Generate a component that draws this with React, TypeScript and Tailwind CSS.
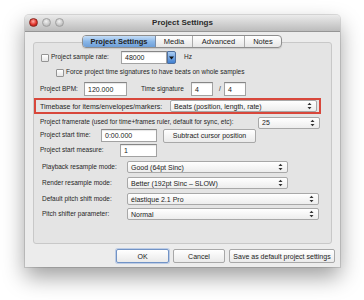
import React from "react";

const font = { fontFamily: '"Liberation Sans", Arial, sans-serif' };

function Arrows() {
  return (
    <svg width="5" height="8" viewBox="0 0 5 8" className="shrink-0">
      <path d="M0.5 3 L2.5 0.8 L4.5 3 Z" fill="#333" />
      <path d="M0.5 5 L2.5 7.2 L4.5 5 Z" fill="#333" />
    </svg>
  );
}

function Select({ text, w, h = 12 }: { text: string; w: number; h?: number }) {
  return (
    <div
      className="flex items-center justify-between shrink-0 border border-[#a8a8a8] rounded-[2px] bg-gradient-to-b from-[#ffffff] to-[#ededed] pl-[3px] pr-[4px] text-[7px] text-[#222]"
      style={{ width: w, height: h }}
    >
      <span className="whitespace-nowrap leading-none">{text}</span>
      <Arrows />
    </div>
  );
}

function Input({ text, w, h = 13 }: { text: string; w: number; h?: number }) {
  return (
    <div
      className="flex items-center shrink-0 border border-[#a2a2a2] border-t-[#868686] bg-white pl-[3px] text-[7px] text-[#222] shadow-[inset_0_1px_1px_rgba(0,0,0,0.1)]"
      style={{ width: w, height: h }}
    >
      <span className="leading-none">{text}</span>
    </div>
  );
}

function Check() {
  return (
    <div className="w-[8px] h-[8px] border border-[#949494] rounded-[1px] bg-gradient-to-b from-[#ffffff] to-[#e6e6e6] shrink-0" />
  );
}

function Btn({ text, w, def = false }: { text: string; w: number; def?: boolean }) {
  return (
    <div
      className={
        "flex items-center justify-center shrink-0 h-[14px] rounded-[2px] bg-gradient-to-b from-[#ffffff] to-[#eaeaea] text-[7px] text-[#222] " +
        (def
          ? "border border-[#7193c6] shadow-[0_0_0_1px_rgba(130,165,220,0.45)]"
          : "border border-[#a8a8a8]")
      }
      style={{ width: w }}
    >
      <span className="leading-none whitespace-nowrap">{text}</span>
    </div>
  );
}

export default function App() {
  return (
    <div className="w-[364px] h-[300px] bg-white overflow-hidden pt-[15px] pl-[25px]" style={font}>
      <div className="w-[315px] h-[252px] bg-[#ececec] rounded-t-[4px] shadow-[0_10px_22px_rgba(0,0,0,0.38),0_0_0_1px_rgba(0,0,0,0.12)] flex flex-col">
        {/* title bar */}
        <div className="relative h-[17px] rounded-t-[4px] bg-gradient-to-b from-[#ebebeb] to-[#bcbcbc] border-b border-[#959595] flex items-center justify-center shrink-0">
          <div className="absolute left-[4px] top-[3px] flex gap-[4px]">
            <div className="w-[9px] h-[9px] rounded-full bg-[radial-gradient(circle_at_45%_35%,#ffb0a8,#e0322a_55%,#8a1210)] border border-[#8a2a22]" />
            <div className="w-[9px] h-[9px] rounded-full bg-[radial-gradient(circle_at_45%_35%,#f2f2f2,#c6c6c6_60%,#a0a0a0)] border border-[#a0a0a0]" />
            <div className="w-[9px] h-[9px] rounded-full bg-[radial-gradient(circle_at_45%_35%,#f2f2f2,#c6c6c6_60%,#a0a0a0)] border border-[#a0a0a0]" />
          </div>
          <span className="text-[8px] font-bold text-[#2a2a2a] leading-none">Project Settings</span>
        </div>

        {/* tabs */}
        <div className="relative z-10 mt-[3px] ml-[57px] flex h-[13px] w-[200px] rounded-[4px] border border-[#8e8e8e] overflow-hidden bg-gradient-to-b from-[#ffffff] to-[#e6e6e6] text-[7.5px] text-[#222] shadow-[0_1px_1px_rgba(0,0,0,0.12)]">
          <div className="w-[73px] flex items-center justify-center bg-gradient-to-b from-[#c6def7] via-[#8ab7e8] to-[#6e9fd8] font-bold border-r border-[#7a8da8]">
            <span className="leading-none">Project Settings</span>
          </div>
          <div className="w-[37px] flex items-center justify-center border-r border-[#aaaaaa]">
            <span className="leading-none">Media</span>
          </div>
          <div className="w-[52px] flex items-center justify-center border-r border-[#aaaaaa]">
            <span className="leading-none">Advanced</span>
          </div>
          <div className="flex-1 flex items-center justify-center">
            <span className="leading-none">Notes</span>
          </div>
        </div>

        {/* group box */}
        <div className="-mt-[6px] ml-[8px] w-[299px] h-[202px] border border-[#c8c8c8] rounded-[3px] bg-[#e4e4e4] flex flex-col text-[6.5px] text-[#262626] shrink-0">
          {/* row1 */}
          <div className="mt-[8px] h-[13px] flex items-center">
            <div className="ml-[7px]"><Check /></div>
            <span className="ml-[2px] w-[70px] leading-none whitespace-nowrap">Project sample rate:</span>
            <div className="flex h-[13px]">
              <Input text="48000" w={46} />
              <div className="w-[9px] h-[13px] rounded-r-[2px] bg-gradient-to-b from-[#a9ccf2] to-[#3f7fd0] border border-[#4e6f9e] flex items-center justify-center">
                <svg width="5" height="4" viewBox="0 0 5 4"><path d="M0 0.5 L5 0.5 L2.5 3.5 Z" fill="#111" /></svg>
              </div>
            </div>
            <span className="ml-[8px] leading-none">Hz</span>
          </div>
          {/* row2 */}
          <div className="mt-[2px] h-[13px] flex items-center">
            <div className="ml-[22px]"><Check /></div>
            <span className="ml-[2px] leading-none whitespace-nowrap">Force project time signatures to have beats on whole samples</span>
          </div>
          {/* row3 */}
          <div className="mt-[3px] h-[14px] flex items-center">
            <span className="ml-[6px] w-[44px] leading-none whitespace-nowrap">Project BPM:</span>
            <Input text="120.000" w={43} h={14} />
            <span className="ml-[14px] w-[50px] leading-none whitespace-nowrap">Time signature</span>
            <Input text="4" w={22} h={14} />
            <span className="ml-[6px] w-[5px] leading-none">/</span>
            <Input text="4" w={22} h={14} />
          </div>
          {/* row4 red */}
          <div className="mt-[2px] w-[287px] h-[16px] border-2 border-[#d8473b] flex items-center">
            <span className="ml-[4px] w-[130px] text-[7px] leading-none whitespace-nowrap">Timebase for items/envelopes/markers:</span>
            <Select text="Beats (position, length, rate)" w={147} h={12} />
          </div>
          {/* row5 */}
          <div className="mt-[2px] h-[13px] flex items-center">
            <span className="ml-[6px] w-[218px] leading-none whitespace-nowrap">Project framerate (used for time+frames ruler, default for sync, etc):</span>
            <Select text="25" w={62} h={12} />
          </div>
          {/* row6 */}
          <div className="h-[13px] flex items-center">
            <span className="ml-[6px] w-[61px] leading-none whitespace-nowrap">Project start time:</span>
            <Input text="0:00.000" w={56} />
            <div className="ml-[6px]"><Btn text="Subtract cursor position" w={93} /></div>
          </div>
          {/* row7 */}
          <div className="mt-[2px] h-[13px] flex items-center">
            <span className="ml-[6px] w-[80px] leading-none whitespace-nowrap">Project start measure:</span>
            <Input text="1" w={37} />
          </div>
          {/* row8 */}
          <div className="mt-[4px] h-[12px] flex items-center">
            <span className="ml-[8px] w-[85px] leading-none whitespace-nowrap">Playback resample mode:</span>
            <Select text="Good (64pt Sinc)" w={161} />
          </div>
          {/* row9 */}
          <div className="mt-[4px] h-[12px] flex items-center">
            <span className="ml-[8px] w-[85px] leading-none whitespace-nowrap">Render resample mode:</span>
            <Select text="Better (192pt Sinc – SLOW)" w={161} />
          </div>
          {/* row10 */}
          <div className="mt-[4px] h-[12px] flex items-center">
            <span className="ml-[8px] w-[85px] leading-none whitespace-nowrap">Default pitch shift mode:</span>
            <Select text="élastique 2.1 Pro" w={192} />
          </div>
          {/* row11 */}
          <div className="mt-[3px] h-[12px] flex items-center">
            <span className="ml-[8px] w-[85px] leading-none whitespace-nowrap">Pitch shifter parameter:</span>
            <Select text="Normal" w={192} />
          </div>
        </div>

        {/* buttons */}
        <div className="mt-[5px] ml-[91px] flex gap-[4px]">
          <Btn text="OK" w={53} def />
          <Btn text="Cancel" w={52} />
          <Btn text="Save as default project settings" w={106} />
        </div>
      </div>
    </div>
  );
}
